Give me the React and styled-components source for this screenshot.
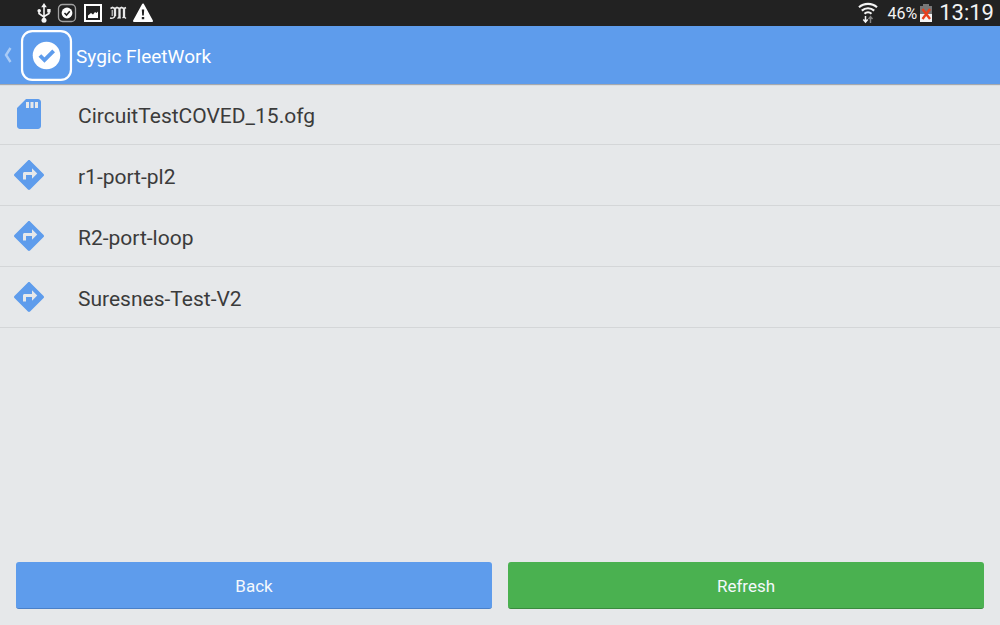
import React from 'react'
import styled, { createGlobalStyle } from 'styled-components'

const files = [
  { name: 'CircuitTestCOVED_15.ofg', type: 'card' },
  { name: 'r1-port-pl2', type: 'route' },
  { name: 'R2-port-loop', type: 'route' },
  { name: 'Suresnes-Test-V2', type: 'route' },
]

const iconPaths = {
  card: 'M18 2h-8L4 8v12c0 1.1.9 2 2 2h12c1.1 0 2-.9 2-2V4c0-1.1-.9-2-2-2zm-6 6h-2V4h2v4zm3 0h-2V4h2v4zm3 0h-2V4h2v4z',
  route:
    'M21.71 11.29l-9-9c-.39-.39-1.02-.39-1.41 0l-9 9c-.39.39-.39 1.02 0 1.41l9 9c.39.39 1.02.39 1.41 0l9-9c.39-.38.39-1.01 0-1.41zM14 14.5V12h-4v3H8v-4c0-.55.45-1 1-1h5V7.5l3.5 3.5-3.5 3.5z',
}

const UsbIcon = () => (
  <svg width='14' height='20' viewBox='0 0 14 20' fill='none' stroke='#f4f4f4' strokeWidth='1.6'>
    <path d='M7 3v13M2 8v2.5L7 14M12 8v2.5L7 13.5' />
    <path d='M7 0l2.8 4.2H4.2z' fill='#f4f4f4' stroke='none' />
    <circle cx='2.2' cy='7.8' r='1.8' fill='#f4f4f4' stroke='none' />
    <path d='M10.2 6h3.4v3.4h-3.4z' fill='#f4f4f4' stroke='none' />
    <circle cx='7' cy='17.2' r='2.5' fill='#f4f4f4' stroke='none' />
  </svg>
)

const TaskIcon = () => (
  <svg width='20' height='20' viewBox='0 0 20 20' fill='none'>
    <rect x='1.5' y='1.5' width='17' height='17' rx='4' stroke='#a2a2a2' strokeWidth='1.3' />
    <circle cx='10' cy='10' r='5.4' fill='#fff' />
    <path d='M7.5 10l2 2 3.3-3.7' stroke='#222' strokeWidth='1.6' />
  </svg>
)

const PictureIcon = () => (
  <svg width='20' height='20' viewBox='0 0 20 20' fill='none'>
    <rect x='2' y='2' width='16' height='16' stroke='#fff' strokeWidth='2' />
    <path d='M5 15v-2.5l3-2.5 2 1.5L12 9l1.5 1L15 8.500V15z' fill='#fff' />
  </svg>
)

const GothicIcon = () => (
  <svg width='18' height='16' viewBox='0 0 18 16' fill='none' stroke='#e8e8e8'>
    <path d='M6 3.5V11M10.5 3.5V12M15 3.500V12' strokeWidth='2.3' />
    <path d='M1.500 3.500L3.500 2.500 6 3.500 8 2.500l2.500 1 2-1 2.500 1L17 2.500' strokeWidth='1.6' />
    <path d='M6 10.500C5.500 13 3.500 13.500 1 13M8.500 13.500l2-1.500 1 1.500M13.500 13l1.500-1 2 1.500' strokeWidth='1.5' />
    <path d='M3.200 5v6' strokeWidth='1' />
  </svg>
)

const WarningIcon = () => (
  <svg width='20' height='20' viewBox='0 0 20 20'>
    <path d='M10 1.5L19 18H1z' fill='#fff' stroke='#fff' strokeWidth='2' strokeLinejoin='round' />
    <path d='M8.8 6.500h2.4l-.4 6H9.2zM8.8 14h2.4v2.300H8.8z' fill='#222' />
  </svg>
)

const WifiIcon = () => (
  <svg width='20' height='22' viewBox='0 0 20 22' fill='none' stroke='#f4f4f4' strokeWidth='2.1'>
    <path d='M1 5.3c5-4.6 13-4.6 18 0M3.8 8.6c3.6-3.2 8.8-3.2 12.4 0M6.5 11.7c2-1.8 5-1.8 7 0' />
    <path d='M7.5 14v6M5.3 17.5l2.2 2.5 2.200-2.500' strokeWidth='1.5' />
    <path d='M12.5 21v-6M10.500 17l2-2.500 2 2.500' stroke='#858585' strokeWidth='1.4' />
  </svg>
)

const BatteryIcon = () => (
  <svg width='14' height='20' viewBox='0 0 14 20'>
    <path d='M4 1h6v2h3v8H1V3h3z' fill='#777' />
    <path d='M1 11h12v8H1z' fill='#f4f4f4' />
    <path d='M3.500 6l7.500 10M11 6L3.500 16' stroke='#e8401c' strokeWidth='2.4' />
  </svg>
)

const App = () => {
  const rows = files.map((file) => (
    <Row key={file.name}>
      <RowIcon viewBox='0 0 24 24' aria-hidden='true'>
        <path d={iconPaths[file.type]} fillRule='evenodd' />
      </RowIcon>
      <span>{file.name}</span>
    </Row>
  ))

  return (
    <>
      <GlobalStyle />
      <Screen>
        <StatusBar>
          <Notifications>
            <UsbIcon />
            <TaskIcon />
            <PictureIcon />
            <GothicIcon />
            <WarningIcon />
          </Notifications>
          <System>
            <WifiIcon />
            <Battery>
              46%
              <BatteryIcon />
            </Battery>
            <Clock>13:19</Clock>
          </System>
        </StatusBar>
        <Header>
          <UpButton aria-label='Navigate up'>
            <svg width='10' height='18' viewBox='0 0 10 18' fill='none'>
              <path d='M8.500 2L4 9l4.500 7' stroke='#a9cbf6' strokeWidth='2.4' />
            </svg>
          </UpButton>
          <Logo viewBox='0 0 52 52' aria-hidden='true'>
            <rect x='2' y='2' width='48' height='48' rx='10' fill='none' stroke='#fff' strokeWidth='2.2' />
            <circle cx='26' cy='26' r='13.5' fill='#fff' />
            <path d='M19.5 26l4.5 4.5 9-9' fill='none' stroke='#5e9cec' strokeWidth='3.8' />
          </Logo>
          <Title>Sygic FleetWork</Title>
        </Header>
        <FileList>{rows}</FileList>
        <Actions>
          <Button>Back</Button>
          <Button $green>Refresh</Button>
        </Actions>
      </Screen>
    </>
  )
}

const GlobalStyle = createGlobalStyle`
  * {
    box-sizing: border-box;
  }

  body {
    margin: 0;
    background-color: #e6e8ea;
    color: #3b3b3b;
    font-family: Roboto, sans-serif;
  }

  svg {
    flex-shrink: 0;
  }
`

const Screen = styled.div`
  display: flex;
  flex-direction: column;
  min-height: 100vh;
`

const StatusBar = styled.div`
  display: flex;
  align-items: center;
  justify-content: space-between;
  height: 26px;
  padding: 0 6px 0 37px;
  background-color: #222;
  color: #f4f4f4;
`

const Notifications = styled.div`
  display: flex;
  align-items: center;
  gap: 6px;
`

const System = styled.div`
  display: flex;
  align-items: center;
  gap: 6px;
`

const Battery = styled.div`
  display: flex;
  align-items: center;
  gap: 2px;
  padding-left: 4px;
  font-size: 16px;
`

const Clock = styled.span`
  font-size: 22px;
  line-height: 26px;
`

const Header = styled.header`
  display: flex;
  align-items: center;
  height: 58px;
  background-color: #5e9cec;
  box-shadow: 0 1px 1px #a5a9af;
  color: #fff;
`

const UpButton = styled.button`
  display: flex;
  padding: 0 8px 0 2px;
  border: 0;
  background: none;
`

const Logo = styled.svg`
  width: 53px;
  height: 53px;
`

const Title = styled.h1`
  margin: 0 0 0 3px;
  padding-top: 2px;
  font-size: 19px;
  font-weight: 400;
`

const FileList = styled.ul`
  flex: 1;
  margin: 0;
  padding: 0;
  list-style: none;
`

const Row = styled.li`
  display: flex;
  align-items: center;
  gap: 31px;
  height: 61px;
  padding: 3px 11px 0;
  border-bottom: 1px solid #d4d6d8;
  font-size: 21px;
`

const RowIcon = styled.svg`
  width: 36px;
  height: 36px;
  margin-bottom: 4px;
  fill: #5e9cec;
`

const Actions = styled.div`
  display: grid;
  grid-template-columns: 1fr 1fr;
  gap: 16px;
  padding: 16px;
`

const Button = styled.button`
  height: 47px;
  padding: 2px 0 0;
  border: 0;
  border-bottom: 1px solid ${({ $green }) => ($green ? '#398b3e' : '#4a80c8')};
  border-radius: 3px;
  background-color: ${({ $green }) => ($green ? '#4ab150' : '#5e9cec')};
  color: #f4f8fc;
  font-family: inherit;
  font-size: 17px;
`

export default App
